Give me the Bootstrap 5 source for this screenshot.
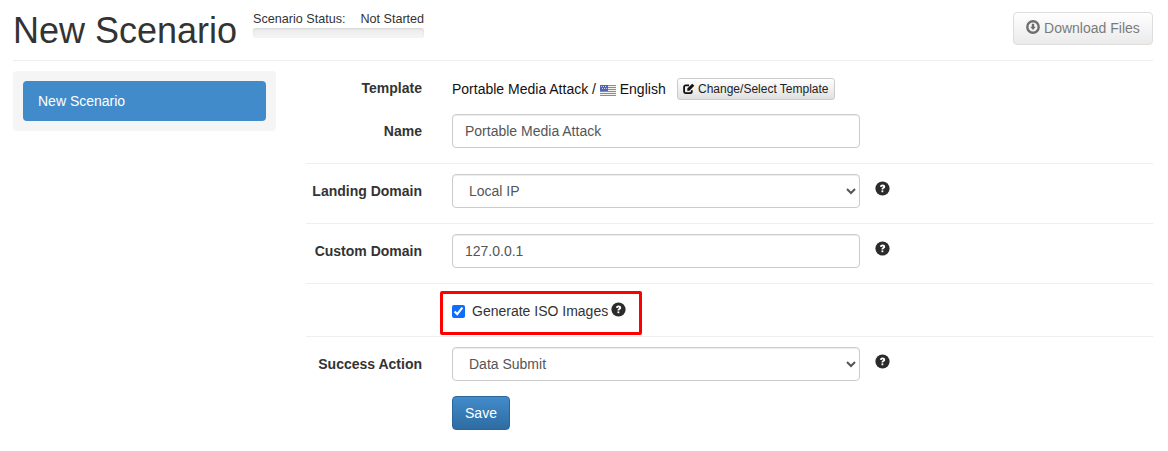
<!DOCTYPE html>
<html lang="en">
<head>
<meta charset="utf-8">
<title>New Scenario</title>
<link rel="stylesheet" href="https://cdn.jsdelivr.net/npm/bootstrap@5.3.0/dist/css/bootstrap.min.css">
<style>
html,body{height:451px;overflow:hidden}
body{font-family:"Liberation Sans",Arial,sans-serif;font-size:14px;line-height:20px;color:#333;background:#fff}
.page-wrap{padding:0 15px 0 13px}
.head-bar{height:61px;border-bottom:1px solid #eee}
.page-title{font-size:36px;line-height:40px;font-weight:500;margin:11px 16px 0 0;color:#333}
.status-box{width:171px;margin-top:11px;font-size:12.6px;line-height:17px}
.status-track{height:10px;background:linear-gradient(#ebebeb,#f5f5f5);border-radius:3px;box-shadow:inset 0 1px 2px rgba(0,0,0,.1)}
.dl-btn{margin-top:12px;width:140px;height:33px;font-size:14px;line-height:20px;padding:4px 0 6px;color:#333;background:linear-gradient(#fff,#e0e0e0);border:1px solid #ccc;border-radius:4px;opacity:.65;text-align:center}
.body-split{padding-top:10px}
.side-well{width:263px;height:60px;padding:10px;background:#f5f5f5;border-radius:4px}
.side-pill{display:block;height:40px;padding:10px 15px;background:#428bca;color:#fff;border-radius:4px;text-decoration:none}
.main-form{width:847px;margin-left:30px}
.form-line{display:flex;align-items:flex-start}
.form-label-cell{width:116px;margin-right:30px;text-align:right;font-weight:700;color:#333}
.form-field{width:408px}
.ctl{display:block;width:408px;height:34px;padding:6px 12px;font-size:14px;line-height:20px;color:#555;background:#fff;border:1px solid #ccc;border-radius:4px;box-shadow:inset 0 1px 1px rgba(0,0,0,.075)}
.help-ico{display:inline-block;width:15px;height:15px;flex:none}
.help-side{margin:7px 0 0 15px}
.sep{height:1px;background:#eee;margin:0}
.tpl-text{color:#111;line-height:20px}
.tpl-btn{display:inline-block;margin-left:11px;height:22px;padding:0 5px;font-size:12px;line-height:20px;color:#222;background:linear-gradient(#fff,#e0e0e0);border:1px solid #ccc;border-radius:3px;vertical-align:1px}
.flag-ico{width:16px;height:11px;vertical-align:-2px}
.alert-frame{width:202px;height:44px;margin-left:-12px;border:3px solid #f00;display:flex;align-items:center;padding:0 0 4px 9px;border-radius:2px}
.alert-frame input{width:13px;height:13px;margin:0 7px 0 0;accent-color:#0d6efd}
.alert-frame .help-ico{margin:-3px 0 0 3px}
.save-btn{width:58px;height:34px;padding:6px 0;font-size:14px;line-height:20px;color:#fff;border:1px solid #2b669a;border-radius:4px;background:linear-gradient(#428bca,#2d6ca2)}
</style>
</head>
<body>
<svg width="0" height="0" class="d-block" aria-hidden="true"><defs>
<symbol id="q-circle" viewBox="0 0 15 15"><circle cx="7.500" cy="7.500" r="7.100" fill="#2b2b2b"/><path d="M5 5.800C5.100 4.400 6.100 3.500 7.600 3.500c1.500 0 2.600.9 2.600 2.200 0 1-.6 1.500-1.200 1.900-.5.3-.7.500-.7 1H6.500c0-1.100.3-1.600 1-2.100.5-.3.700-.5.700-.8 0-.3-.3-.5-.6-.5-.4 0-.7.200-.8.700z" fill="#fff"/><rect x="6.500" y="9.400" width="1.800" height="1.800" fill="#fff"/></symbol>
</defs></svg>
<div class="page-wrap">
  <div class="head-bar d-flex align-items-start">
    <h1 class="page-title">New Scenario</h1>
    <div class="status-box">
      <div class="d-flex justify-content-between"><span>Scenario Status:</span><span>Not Started</span></div>
      <div class="status-track"></div>
    </div>
    <button type="button" class="dl-btn ms-auto" disabled><svg width="14" height="14" viewBox="0 0 14 14" style="vertical-align:-1px"><circle cx="7" cy="7" r="5.700" fill="none" stroke="#222" stroke-width="2.400"/><path d="M5.800 3.800h2.400v3h1.600L7 10 4.200 6.800h1.600z" fill="#222"/></svg> Download Files</button>
  </div>
  <div class="body-split d-flex align-items-start">
    <div class="side-well"><a class="side-pill" href="#">New Scenario</a></div>
    <form class="main-form">
      <div class="form-line" style="padding-top:7px;height:43px">
        <div class="form-label-cell">Template</div>
        <div class="tpl-text text-nowrap">Portable Media Attack / <svg class="flag-ico" viewBox="0 0 16 11"><rect width="16" height="11" fill="#f3f0f0"/><g fill="#e0686e"><rect y="0" width="16" height="1"/><rect y="2" width="16" height="1"/><rect y="4" width="16" height="1"/><rect y="6" width="16" height="1"/><rect y="8" width="16" height="1"/><rect y="10" width="16" height="1"/></g><rect width="8" height="6" fill="#5663b4"/><g fill="#c9cfee"><rect x="1" y="1" width="1" height="1"/><rect x="3" y="1" width="1" height="1"/><rect x="5" y="1" width="1" height="1"/><rect x="2" y="3" width="1" height="1"/><rect x="4" y="3" width="1" height="1"/><rect x="6" y="3" width="1" height="1"/></g></svg> English<span class="tpl-btn"><svg width="12" height="12" viewBox="0 0 12 12" style="vertical-align:-2px"><path d="M8.800 7.200v1.300A1.600 1.600 0 0 1 7.200 10.100H2.700A1.600 1.600 0 0 1 1.100 8.500V4A1.600 1.600 0 0 1 2.700 2.400h3.400" fill="none" stroke="#111" stroke-width="1.800"/><path d="M4.300 5.600 9.200.7l2.100 2.100-4.900 4.900-2.100.1z" fill="#111"/></svg> Change/Select Template</span></div>
      </div>
      <div class="form-line" style="height:49px">
        <div class="form-label-cell" style="padding-top:7px">Name</div>
        <div class="form-field"><input class="ctl" type="text" value="Portable Media Attack"></div>
      </div>
      <div class="sep"></div>
      <div class="form-line" style="height:59px;padding-top:10px">
        <div class="form-label-cell" style="padding-top:7px">Landing Domain</div>
        <div class="form-field"><select class="ctl"><option>Local IP</option></select></div>
        <svg class="help-ico help-side"><use href="#q-circle"/></svg>
      </div>
      <div class="sep"></div>
      <div class="form-line" style="height:59px;padding-top:10px">
        <div class="form-label-cell" style="padding-top:7px">Custom Domain</div>
        <div class="form-field"><input class="ctl" type="text" value="127.0.0.1"></div>
        <svg class="help-ico help-side"><use href="#q-circle"/></svg>
      </div>
      <div class="sep"></div>
      <div class="form-line" style="height:52px;padding-top:7px">
        <div class="form-label-cell"></div>
        <div class="form-field"><label class="alert-frame"><input type="checkbox" checked>Generate ISO Images<svg class="help-ico"><use href="#q-circle"/></svg></label></div>
      </div>
      <div class="sep"></div>
      <div class="form-line" style="height:59px;padding-top:10px">
        <div class="form-label-cell" style="padding-top:7px">Success Action</div>
        <div class="form-field"><select class="ctl"><option>Data Submit</option></select></div>
        <svg class="help-ico help-side"><use href="#q-circle"/></svg>
      </div>
      <div class="form-line">
        <div class="form-label-cell"></div>
        <div class="form-field"><button type="button" class="save-btn">Save</button></div>
      </div>
    </form>
  </div>
</div>
<script src="https://cdn.jsdelivr.net/npm/bootstrap@5.3.0/dist/js/bootstrap.bundle.min.js"></script>
</body>
</html>
